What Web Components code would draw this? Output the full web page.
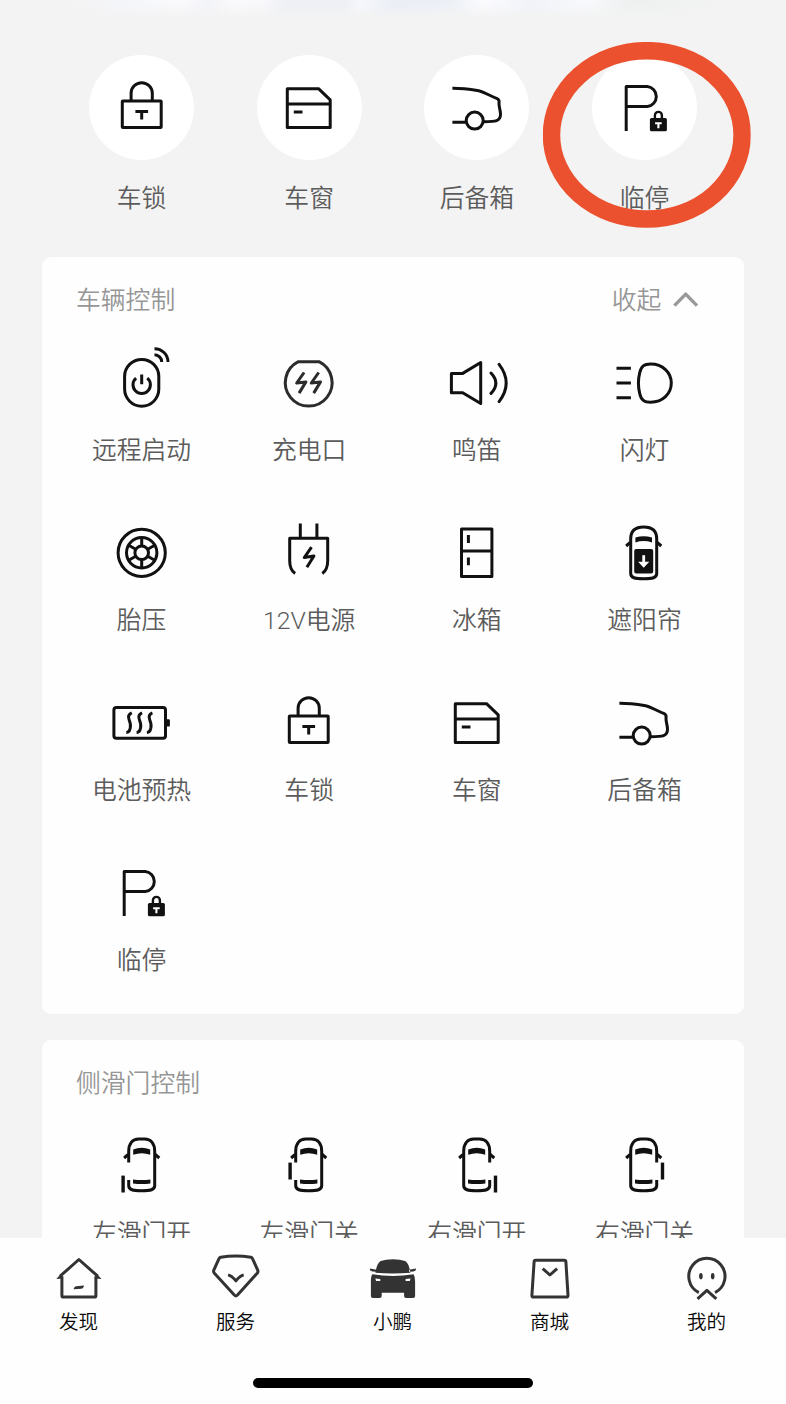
<!DOCTYPE html>
<html lang="zh-CN">
<head>
<meta charset="utf-8">
<meta name="viewport" content="width=device-width">
<title>车辆控制</title>
<style>
  html, body { margin: 0; height: 100%; }
  body { font-family: Roboto, "Noto Sans CJK SC", "Noto Sans", sans-serif; background: #fefefe; overflow: hidden; }
</style>
</head>
<body>
<control-app></control-app>
<script>
// Icons are drawn around their own centre, in CSS pixels.
const carBody = {
  full: '<path d="M0-25.9C8.5-25.9 13-22 13-14V21C13 25 9 26 0 26S-13 25-13 21V-14C-13-22-8.5-25.9 0-25.9Z"/>',
  left: '<path d="M-13-2.2V-13.5C-13-21.5-9-25.9-3-25.9H3C9-25.9 13-21.5 13-13.5V21C13 25 9 26 0 26S-13 25-13 21V15.1"/>',
  right: '<path d="M13-2.2V-13.5C13-21.5 9-25.9 3-25.9H-3C-9-25.9-13-21.5-13-13.5V21C-13 25-9 26 0 26S13 25 13 21V15.1"/>'
};
const mirrors = '<path d="M-13.5-10.3L-17.6-6.8M13.5-10.3L17.6-6.8"/>';
const screen = '<path class="f" d="M-8.5-15.4Q0-18.6 8.5-15.4V-10Q0-13-8.5-10Z"/>';
const rear = '<path class="f" d="M-8.7 14.6Q0 16 8.7 14.6V18.6Q0 19.8-8.7 18.6Z"/>';
const slide = (side, x, y) => carBody[side] + mirrors + screen + rear + `<path d="M${x} ${y}v16.9" stroke-width="3.4"/>`;

const ICONS = {
  lock: '<rect x="-19.4" y="-6.8" width="38.9" height="26.6" rx=".6"/><path d="M-10.6-6.8V-14.5a10.6 10.6 0 0 1 21.2 0V-6.8M-6.3 3.6H6.4M0 3.6V11.8"/>',
  window: '<path d="M-21.4-19.1H9.8L21.5-8V19.8H-21.4ZM-21.4-3.8H21.5M-14.9 4.2H-6.2"/>',
  trunk: '<path d="M-24.3-19.5C-16-19.6-6-18.3 2-17.1C7-16 13-12 20.5-9.2C23-8.2 22.6-6.5 22.3-4C22.3-1 23.8 3 23.8 6.5C23.8 13.5 19 13.8 7 13.9M-24.3 14.4H-11"/><circle cx="-2" cy="12.8" r="8.5"/>',
  park: '<path d="M-17.5 23.2V-21.2H3.6a10 10 0 0 1 0 19.9H-17.5"/><path d="M11.2 11V7.6a3.5 3.5 0 0 1 7 0V11" stroke-width="2.4"/><rect class="f" x="6.2" y="10.2" width="17" height="13.3" rx="1.6"/><path d="M11.4 15.4H18M14.7 15.4V20.4" stroke="#fff" stroke-width="2.1"/>',
  remote: '<rect x="-17.1" y="-23.4" width="34.2" height="46.8" rx="17.1"/><path d="M-5.6-4.7A8.7 8.7 0 1 0 5.6-4.7M0-8.2V1.5"/><path d="M12.8-34.1A13.4 13.4 0 0 1 26.3-20.8M12.8-28A7.2 7.2 0 0 1 20-20.8"/>',
  charge: '<g stroke="#2b2b2b"><path d="M-10.3-21.1H10.3A23.4 23.4 0 1 1-10.3-21.1Z"/><path d="M-4.6-10.3L-12 .2-2.8-.9-9.6 10.3M10-10.3L2.6 .2 11.8-.9 5 10.3"/></g>',
  horn: '<path d="M-25.3-9.4H-14L4-20.3V20.7L-14 10H-25.3Z"/><path d="M14.3-9.8Q24 .5 14.3 10.6M22.4-18.4Q36.6 .2 22.4 18.8" stroke-linecap="round"/>',
  light: '<path d="M-27.2-14.6H-12.8M-27.2 .2H-12.8M-27.2 14.9H-12.8"/><path d="M7-18.8C19-18.8 27.6-10.3 27.6 .3S19 19.4 7 19.4C.3 19.4-2.4 17.2-3.9 11C-5.7 4-5.7-3.5-3.9-10.5C-2.4-16.7 .3-18.8 7-18.8Z"/>',
  tire: '<circle r="23.6"/><circle r="15.2"/><circle r="6.8"/><path d="M0-15V-7M0 15V7M-13-7.5L-6-3.5M13-7.5L6-3.5M-13 7.5L-6 3.5M13 7.5L6 3.5"/>',
  plug: '<path d="M-8.4-29.3V-15M8.2-29.3V-15M-13.6 20.8Q-19 17-19 8V-14.6H19V8Q19 17 13.6 20.8"/><path d="M2.8-5.6L-4.4 4.8 5.2 3.2-1.8 14.4"/>',
  fridge: '<path d="M-15.2-23.8H15.2V23.8H-15.2ZM-15.2-1.8H15.2M-8.3-17.8V-9.8M-8.3 4.6V12.4"/>',
  shade: carBody.full + mirrors + '<path class="f" d="M-8.3-15.2Q0-18 8.3-15.2V-10.4Q0-13-8.3-10.4Z"/><rect class="f" x="-9.5" y="-3.8" width="19" height="24.6" rx="2"/><path d="M0 2.4V12" stroke="#fff" stroke-width="2.8"/><path d="M-5.6 9L0 15 5.6 9Z" style="fill:#fff;stroke:none"/>',
  battery: '<rect x="-27.8" y="-15.4" width="51.6" height="30.8" rx="2.5"/><path class="f" d="M24.5-3.6h2.6q1.1 0 1.1 1.2v5q0 1.2-1.1 1.2h-2.6z"/><path d="M-9.9-10Q-14.6-8-12.6-3T-11.4 5Q-12.2 9.6-15.4 9.8M.4-10Q-4.3-8-2.3-3T-1.1 5Q-1.9 9.6-5.1 9.8M10.7-10Q6-8 8-3T9.2 5Q8.4 9.6 5.2 9.8"/>',
  'left-open': slide('left', -18.6, 10.8),
  'left-close': slide('left', -18.6, -2.2),
  'right-open': slide('right', 18.8, 10.8),
  'right-close': slide('right', 18.8, -2.2),
  chevron: '<path d="M-11.3 5.8L0-5.7 11.3 5.8" stroke="#999" stroke-width="3.4"/>',
  home: '<path d="M-16.8-1.6V17.6Q-16.8 19.3-15.1 19.3H15.5Q17.2 19.3 17.2 17.6V-1.6"/><path d="M-18.6-1.6L.2-18.3 19-1.6" stroke-width="3"/><path class="f" d="M-22.4 1.2L-17.5-4.2-15.4 .6ZM22.8 1.2L17.9-4.2 15.8 .6Z"/><path class="f" d="M-5.2 11.4Q-4.4 8.5-2.6 8.4L5.4 7.8Q4.8 10.9 2.6 11Z"/>',
  service: '<path d="M-15-20.5Q0-23 15.2-20.5Q16.3-20.2 16.9-18.9L22-7.6Q22.7-6 21.5-4.6L1.8 17.2Q.2 18.8-1.4 17.2L-21.3-4.6Q-22.6-6-21.9-7.6L-16.8-18.9Q-16.1-20.2-15-20.5Z" stroke-width="3"/><path d="M-7.6-2.9Q-4-2 .2 3Q4.4-2 8-2.9"/>',
  car: '<path class="f" d="M-17.3-5.1Q-15.7-15-12.1-16.9Q-7-18.6 .2-18.6T12.5-16.9Q16.1-15 17.7-5.1Q9-4.3 .2-4.3T-17.3-5.1ZM-22.8-9.2L-16-8V-6.1Q-21-6-22.8-7.6ZM23.2-9.2L16.4-8V-6.1Q21.4-6 23.2-7.6ZM-20.5-3.6Q-10-1.8 .2-1.8T20.9-3.6Q22.4-1 22.4 3.2V18.2Q22.4 20.2 20.4 20.2H13.4Q11.4 20.2 11.4 18.2V14.9H-11V18.2Q-11 20.2-13 20.2H-19.8Q-21.8 20.2-21.8 18.2V3.2Q-21.9-1-20.5-3.6Z"/><path d="M-17.4 .6L-12.4 1.2V3.3H-16.6ZM17.9 .6L12.9 1.2V3.3H17.1Z" style="fill:#fff;stroke:none"/>',
  shop: '<path d="M-14-17.5H14.6Q16.1-17.5 16.2-16L18.3 17.6Q18.4 19.3 16.7 19.3H-16.2Q-17.9 19.3-17.8 17.6L-15.6-16Q-15.5-17.5-14-17.5Z"/><path d="M-7-9.2L.2-2.8 7.4-9.2"/>',
  mine: '<path d="M-7.9 14.8A18.1 18.1 0 1 1 8.3 14.8M-9.2 21L.2 12.6 9.6 21"/><ellipse class="f" cx="-5.8" cy="-1.6" rx="1.8" ry="3.1"/><ellipse class="f" cx="6" cy="-1.6" rx="1.8" ry="3.1"/>'
};

function define(name, html, ready) {
  const template = document.createElement('template');
  template.innerHTML = html;
  customElements.define(name, class extends HTMLElement {
    connectedCallback() {
      if (this.shadowRoot) return;
      this.attachShadow({ mode: 'open' }).append(template.content.cloneNode(true));
      if (ready) ready(this, this.shadowRoot);
    }
  });
}

function placeIcon(el, root) {
  const icon = document.createElement('line-icon');
  icon.setAttribute('name', el.getAttribute('icon'));
  root.querySelector('line-icon').replaceWith(icon);
}

define('line-icon', `
  <style>
    :host { display: block; width: 80px; height: 80px; color: #111; }
    svg { display: block; width: 100%; height: 100%; overflow: visible; fill: none;
          stroke: currentColor; stroke-width: 3; stroke-linejoin: round; }
    .f { fill: currentColor; stroke: none; }
  </style>
  <svg viewBox="-39.7 -39.8 80 80" aria-hidden="true"></svg>`,
  (el, root) => { root.querySelector('svg').innerHTML = ICONS[el.getAttribute('name')]; });

define('control-tile', `
  <style>
    :host { display: flex; flex-direction: column; align-items: center; gap: 13.5px; margin-bottom: -1px; }
    .label { font-size: 24.8px; line-height: 30px; font-weight: 350; color: #5c5c5c; white-space: nowrap; }
    .disc { display: grid; place-items: center; }
    :host([round]) { gap: 24px; }
    :host([round]) .disc { width: 105px; height: 105px; border-radius: 50%; background: #fff; }
  </style>
  <div class="disc"><line-icon></line-icon></div>
  <div class="label"><slot></slot></div>`, placeIcon);

define('control-card', `
  <style>
    :host { display: block; background: #fefefe; border-radius: 9px; padding: 0 15.7px 39px; }
    header { display: flex; justify-content: space-between; align-items: center; height: 82.5px;
             padding: 3px 28px 0 18.3px; font-size: 24.8px; font-weight: 350; line-height: 30px; color: #969696; }
    .grid { display: grid; grid-template-columns: repeat(4, 1fr); row-gap: 47.5px; }
  </style>
  <header><span><slot name="title"></slot></span><slot name="action"></slot></header>
  <div class="grid"><slot></slot></div>`);

define('collapse-button', `
  <style>
    :host { display: flex; align-items: center; gap: 8px; }
    line-icon { margin: -3px -25.5px 0 -23.5px; }
  </style>
  <slot></slot><line-icon name="chevron"></line-icon>`);

define('tab-item', `
  <style>
    :host { display: flex; flex-direction: column; align-items: center; }
    line-icon { height: 80px; color: #333; }
    span { margin-top: -7.5px; font-size: 19.6px; line-height: 24px; font-weight: 350; color: #080808; }
  </style>
  <line-icon></line-icon><span><slot></slot></span>`, placeIcon);

define('tab-bar', `
  <style>
    :host { display: flex; flex-direction: column; align-items: center; justify-content: space-between;
            height: 166px; box-sizing: border-box; padding-bottom: 16px; background: #fefefe; }
    nav { display: grid; grid-template-columns: repeat(5, 1fr); width: 785px; margin-right: 1px; }
    .home { width: 280px; height: 10px; border-radius: 5px; background: #000; }
  </style>
  <nav><slot></slot></nav><div class="home"></div>`);

define('marker-ring', `
  <style>
    :host { position: absolute; left: 50%; top: 50%; width: 208px; height: 186px;
            transform: translate(calc(-50% + 2.8px), calc(-50% + .9px)); pointer-events: none; }
    svg { display: block; }
  </style>
  <svg width="208" height="186" viewBox="0 0 208 186"><ellipse cx="104" cy="93" rx="95.3" ry="84.2" fill="none" stroke="#eb512e" stroke-width="17.5"/></svg>`);

define('control-app', `
  <style>
    :host { display: grid; grid-template-rows: 1238px 166px; width: 786px; height: 1404px; }
    main { overflow: hidden; background: #f3f3f3; }
    .hero { height: 18px; margin: 0 50px 37px;
      background: linear-gradient(180deg, transparent 20%, #f3f3f3),
        linear-gradient(100deg, #f3f3f3 2%, #f5f6fa 12%, #fafafd 19%, #f3f4f8 23%, #fafafc 27%, #f8f8fb 31%, #eef0f5 34%, #eef0f5 43%, #f6f7fc 45%, #eaeef5 50%, #ecf0f6 58%, #fbfbfe 63%, #f1f3f9 70%, #f8f9fc 78%, #eef0f0 84%, #f3f3f3 99%); }
    .quick { display: grid; grid-template-columns: repeat(4, 1fr); height: 158px; padding: 0 57.7px; margin-bottom: 44px; }
    .marked { position: relative; }
    control-card { margin: 0 42px 25.5px; }
  </style>
  <main>
    <div class="hero"></div>
    <div class="quick">
      <control-tile round icon="lock">车锁</control-tile>
      <control-tile round icon="window">车窗</control-tile>
      <control-tile round icon="trunk">后备箱</control-tile>
      <div class="marked"><control-tile round icon="park">临停</control-tile><marker-ring></marker-ring></div>
    </div>
    <control-card>
      <span slot="title">车辆控制</span>
      <collapse-button slot="action">收起</collapse-button>
      <control-tile icon="remote">远程启动</control-tile>
      <control-tile icon="charge">充电口</control-tile>
      <control-tile icon="horn">鸣笛</control-tile>
      <control-tile icon="light">闪灯</control-tile>
      <control-tile icon="tire">胎压</control-tile>
      <control-tile icon="plug">12V电源</control-tile>
      <control-tile icon="fridge">冰箱</control-tile>
      <control-tile icon="shade">遮阳帘</control-tile>
      <control-tile icon="battery">电池预热</control-tile>
      <control-tile icon="lock">车锁</control-tile>
      <control-tile icon="window">车窗</control-tile>
      <control-tile icon="trunk">后备箱</control-tile>
      <control-tile icon="park">临停</control-tile>
    </control-card>
    <control-card>
      <span slot="title">侧滑门控制</span>
      <control-tile icon="left-open">左滑门开</control-tile>
      <control-tile icon="left-close">左滑门关</control-tile>
      <control-tile icon="right-open">右滑门开</control-tile>
      <control-tile icon="right-close">右滑门关</control-tile>
    </control-card>
  </main>
  <tab-bar>
    <tab-item icon="home">发现</tab-item>
    <tab-item icon="service">服务</tab-item>
    <tab-item icon="car">小鹏</tab-item>
    <tab-item icon="shop">商城</tab-item>
    <tab-item icon="mine">我的</tab-item>
  </tab-bar>`);
</script>
</body>
</html>
